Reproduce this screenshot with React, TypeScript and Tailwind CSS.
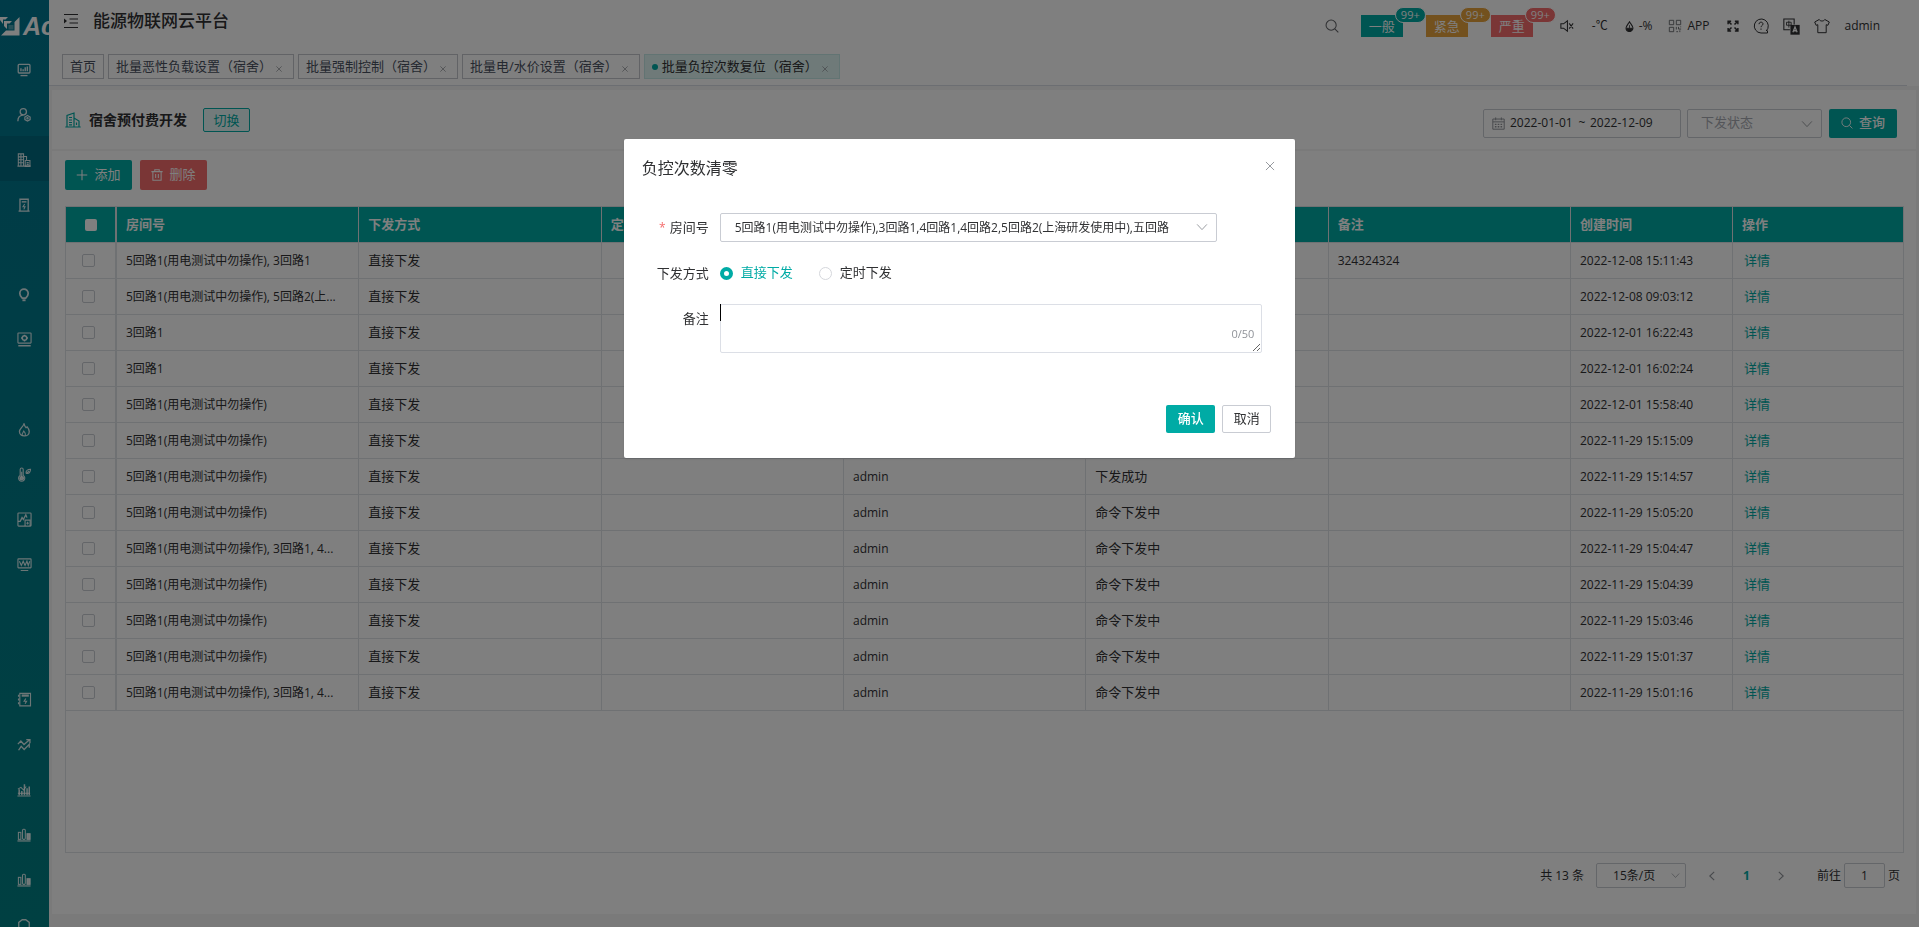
import { useState } from "react";
import type { ReactNode } from "react";
import clsx from "clsx";

type RecordRow = {
  room: string;
  operator: string;
  status: string;
  remark?: string;
  createdAt: string;
};

type TabItem = {
  label: string;
  active?: boolean;
  closable?: boolean;
};

type AlarmTag = {
  label: string;
  className: string;
};

const ROOM_A = "5回路1(用电测试中勿操作)";
const ROOM_ALL = "5回路1(用电测试中勿操作),3回路1,4回路1,4回路2,5回路2(上海研发使用中),五回路";

const TABS: TabItem[] = [
  { label: "首页" },
  { label: "批量恶性负载设置（宿舍）", closable: true },
  { label: "批量强制控制（宿舍）", closable: true },
  { label: "批量电/水价设置（宿舍）", closable: true },
  { label: "批量负控次数复位（宿舍）", closable: true, active: true },
];

const ALARMS: AlarmTag[] = [
  { label: "一般", className: "bg-[#00aba5]" },
  { label: "紧急", className: "bg-[#e6a23c]" },
  { label: "严重", className: "bg-[#f56c6c]" },
];

const COLUMNS = ["房间号", "下发方式", "定时时间", "操作人", "下发状态", "备注", "创建时间", "操作"];

const ROWS: RecordRow[] = [
  { room: `${ROOM_A}, 3回路1`, operator: "admin", status: "下发成功", remark: "324324324", createdAt: "2022-12-08 15:11:43" },
  { room: `${ROOM_A}, 5回路2(上...`, operator: "admin", status: "下发成功", createdAt: "2022-12-08 09:03:12" },
  { room: "3回路1", operator: "admin", status: "下发成功", createdAt: "2022-12-01 16:22:43" },
  { room: "3回路1", operator: "admin", status: "下发成功", createdAt: "2022-12-01 16:02:24" },
  { room: ROOM_A, operator: "admin", status: "下发成功", createdAt: "2022-12-01 15:58:40" },
  { room: ROOM_A, operator: "admin", status: "下发成功", createdAt: "2022-11-29 15:15:09" },
  { room: ROOM_A, operator: "admin", status: "下发成功", createdAt: "2022-11-29 15:14:57" },
  { room: ROOM_A, operator: "admin", status: "命令下发中", createdAt: "2022-11-29 15:05:20" },
  { room: `${ROOM_A}, 3回路1, 4...`, operator: "admin", status: "命令下发中", createdAt: "2022-11-29 15:04:47" },
  { room: ROOM_A, operator: "admin", status: "命令下发中", createdAt: "2022-11-29 15:04:39" },
  { room: ROOM_A, operator: "admin", status: "命令下发中", createdAt: "2022-11-29 15:03:46" },
  { room: ROOM_A, operator: "admin", status: "命令下发中", createdAt: "2022-11-29 15:01:37" },
  { room: `${ROOM_A}, 3回路1, 4...`, operator: "admin", status: "命令下发中", createdAt: "2022-11-29 15:01:16" },
];

function Icon({ children, className = "size-4" }: { children: ReactNode; className?: string }) {
  return (
    <svg
      viewBox="0 0 16 16"
      className={clsx("shrink-0", className)}
      fill="none"
      stroke="currentColor"
      strokeWidth="1.2"
      aria-hidden="true"
    >
      {children}
    </svg>
  );
}

function ChevronDown({ className }: { className?: string }) {
  return (
    <Icon className={clsx("pointer-events-none", className)}>
      <path d="M1.5 4.5 8 11.5l6.5-7" />
    </Icon>
  );
}

function SearchIcon({ className }: { className?: string }) {
  return (
    <Icon className={className}>
      <circle cx="7" cy="7" r="5.8" />
      <path d="m11.2 11.2 4 4" />
    </Icon>
  );
}

const chartIcon = (
  <Icon className="size-[14px]">
    <path d="M.5 14.8h15" strokeWidth="1.4" />
    <rect x="1.6" y="5" width="2.8" height="8" />
    <rect x="6.3" y="1.5" width="3.2" height="11.5" rx="1.2" />
    <rect x="11.4" y="6.5" width="3.6" height="6.5" fill="currentColor" />
  </Icon>
);

// null keeps an empty slot for a menu entry without an icon
const MENU: { name: string; icon: ReactNode }[] = [
  {
    name: "监控",
    icon: (
      <Icon className="size-[14px]">
        <rect x="1.4" y="1.6" width="13.4" height="9.8" rx="1" strokeWidth="1.5" />
        <path d="M4.5 9.5V6M7 9.5V7.2M9.4 9.5V4.8M11.8 9.5V4" strokeWidth="1.6" />
        <path d="M4 14.4h8" strokeWidth="1.5" />
      </Icon>
    ),
  },
  {
    name: "用户",
    icon: (
      <Icon className="size-[14px]">
        <circle cx="7.2" cy="4.4" r="3.6" strokeWidth="1.5" />
        <path d="M1 15c0-4 2.4-6.4 5.6-6.8" strokeWidth="1.5" />
        <path d="m12 8.6 3 1.7v2.9l-3 1.8-3-1.8v-2.9z" strokeWidth="1.4" />
        <circle cx="12" cy="11.8" r=".8" />
      </Icon>
    ),
  },
  {
    name: "宿舍",
    icon: (
      <Icon className="size-[14px]">
        <path d="M1.5 14.8V1h6v13.8M4.5 1v13.8M1.5 4.4h6M1.5 7.8h6M1.5 11.2h6M.5 15h15" />
        <path d="M7.5 4h3.4v4M9.4 8.6h5.4V15H9.4zM11 11h2.4M11 13h2.4" />
      </Icon>
    ),
  },
  {
    name: "电表",
    icon: (
      <Icon className="size-[14px]">
        <path d="M3.4 15V1.4h9.4V15M1.8 15h12.6" strokeWidth="1.5" />
        <path d="M5.4 4.4h5.4" strokeWidth="1.6" />
        <path d="m8.8 6.8-2 3.2h2.4l-1.4 3" />
      </Icon>
    ),
  },
  { name: "", icon: null },
  {
    name: "照明",
    icon: (
      <Icon className="size-[14px]">
        <path d="M6 11.6C4.4 10 3.2 8.4 3.2 6.2a4.8 4.8 0 0 1 9.6 0c0 2.2-1.2 3.8-2.8 5.4z" strokeWidth="2" />
        <path d="M6.2 14h3.6" strokeWidth="2.2" />
      </Icon>
    ),
  },
  {
    name: "设备",
    icon: (
      <Icon className="size-[15px]">
        <rect x="1" y="1" width="14" height="10.8" rx=".6" />
        <circle cx="8" cy="6.4" r="2.4" strokeWidth="1.6" />
        <path d="M8 2.8v1.2M8 8.8V10M4.4 6.4h1.2M10.4 6.4h1.2M1.4 14.6h13.2" strokeWidth="1.5" />
      </Icon>
    ),
  },
  { name: "", icon: null },
  {
    name: "消防",
    icon: (
      <Icon className="size-[14px]">
        <path d="M8 1c.6 2.2 1 3 2.4 4.4l1.2-1c1.6 1.8 2.4 3.4 2.4 5.2 0 3-2.4 5.2-5.6 5.2s-5.6-2.2-5.6-5C2.8 6.4 6.600 5 8 1z" strokeWidth="1.5" />
        <path d="M6 14.4c-.8-2.6 1-3.2 1.8-5.2 1.4 1.4 2.4 2.8 1.8 5.200" />
      </Icon>
    ),
  },
  {
    name: "温度",
    icon: (
      <Icon className="size-[15px]">
        <path d="M3.4 9V2.6a1.6 1.6 0 0 1 3.2 0V9a3.3 3.3 0 1 1-3.2 0z" />
        <circle cx="5" cy="12" r="1.9" fill="currentColor" />
        <path d="M5 11V5" />
        <path d="M9.6 6.6c0-3 2-4.2 4.8-4.2 0 3-1.6 4.8-4 4.4l2.4-2.6" />
      </Icon>
    ),
  },
  {
    name: "能耗分析",
    icon: (
      <Icon className="size-[15px]">
        <rect x="1" y="1" width="14" height="14" rx=".8" />
        <path d="M1 10h2.4l2-4 1.4 2 2.600-5 1.200 3" strokeWidth="1.4" />
        <path d="M8.600 15V8.600h5.400V15M11.300 10.400v3M10 12h2.600" />
      </Icon>
    ),
  },
  {
    name: "电能质量",
    icon: (
      <Icon className="size-[15px]">
        <rect x="1" y="2" width="14" height="9.6" rx=".6" />
        <path d="m2.6 4.5 2 4.500 2-4.500 2 4.500 2-4.500L12 9l1.600-4.500M4 14.400h8" />
      </Icon>
    ),
  },
  { name: "", icon: null },
  { name: "", icon: null },
  {
    name: "抄表",
    icon: (
      <Icon className="size-[15px]">
        <path d="M3 1.4h11.4v13.4H3zM1.600 3v2M1.600 7v2M1.600 11v2" />
        <path d="M5 3.800h7.600" strokeWidth="2.400" />
        <path d="M9.400 7 7.600 9.800h2.600l-1.600 2.800" />
      </Icon>
    ),
  },
  {
    name: "趋势",
    icon: (
      <Icon className="size-[14px]">
        <path d="m1 7 3.400-3.600L8 7.400l6-5M10.600 1.800H14.800V6" strokeWidth="1.5" />
        <path d="m1.800 14 3-4.400 3.400 3.600L14 7.200v4" strokeWidth="1.5" />
      </Icon>
    ),
  },
  {
    name: "统计",
    icon: (
      <Icon className="size-[14px]">
        <path d="M.5 14.8h15M1 11.6h14" />
        <path d="M2.5 14V7M5.500 14V9M8.500 14V1.500M11.500 14V6M14 14V4" strokeWidth="1.7" />
        <path d="m1 7 3.500-2 3 3 3-4" />
      </Icon>
    ),
  },
  { name: "报表", icon: chartIcon },
  { name: "日报", icon: chartIcon },
  {
    name: "运维",
    icon: (
      <Icon className="size-[14px]">
        <path d="M4.500 15v-3.500H2V5L6 2h4l4 3v6.500h-2.500V15" strokeWidth="1.5" />
      </Icon>
    ),
  },
];

function Logo() {
  return (
    <div className="flex h-[46px] shrink-0 items-center gap-[3px] overflow-hidden pt-1.5 text-white">
      <svg viewBox="0 0 20 20" className="size-5 shrink-0" fill="currentColor" aria-hidden="true">
        <path d="M0 1h8L5.500 3.500H3V8L0 4z" />
        <path d="M4 5h8L9.500 7.500H7V13L4 10z" />
        <path d="M19.500 1v18.500H1L6 14.500h8.500V6z" />
        <path d="M8.500 9h5v4.500h-5z" fillOpacity=".3" />
      </svg>
      <span className="font-['Liberation_Sans',sans-serif] text-[25px] leading-none font-bold italic">Ac</span>
    </div>
  );
}

function Sidebar() {
  return (
    <nav
      aria-label="主菜单"
      className="flex h-screen w-[49px] shrink-0 flex-col overflow-hidden bg-linear-to-b from-[#007790] to-[#008084]"
    >
      <Logo />
      {MENU.map((item, index) => (
        <a
          key={index}
          href="#"
          aria-label={item.name || undefined}
          className={clsx(
            "flex h-[45px] shrink-0 items-center justify-center pt-0.5 pr-px text-white/85",
            index === 2 && "bg-[#006a80]"
          )}
        >
          {item.icon}
        </a>
      ))}
    </nav>
  );
}

function Header() {
  return (
    <header className="bg-white">
      <div className="mr-3 border-b border-[#d8dce5]">
        <div className="flex h-[50px] items-start justify-between">
          <div className="flex h-[42px] items-center gap-[14px] pl-[14px]">
            <button type="button" aria-label="展开菜单" className="text-[#303133]">
              <Icon className="size-4">
                <path d="M1 1.500h14M6.500 6h8.500M6.500 10h8.500M1 14.500h14" strokeWidth="1.2" />
                <path d="M1 5.500v5L4 8z" fill="currentColor" stroke="none" />
              </Icon>
            </button>
            <h1 className="text-[17px] font-medium text-[#303133]">能源物联网云平台</h1>
          </div>

          <div className="flex h-[50px] items-center pt-0.5 pr-[27px] text-xs text-[#303133]">
            <button type="button" aria-label="搜索" className="mr-[22px] text-[#606266]">
              <SearchIcon className="size-[14px]" />
            </button>
            <div className="mr-[27px] flex gap-[23px]">
              {ALARMS.map((alarm) => (
                <button
                  key={alarm.label}
                  type="button"
                  className={clsx("relative h-[22px] w-[42px] text-[13px] leading-[22px] text-white", alarm.className)}
                >
                  {alarm.label}
                  <span
                    className={clsx(
                      "absolute -top-2 left-[34px] h-4 w-[31px] rounded-full border border-white text-[11px] leading-[14px]",
                      alarm.className
                    )}
                  >
                    99+
                  </span>
                </button>
              ))}
            </div>
            <button type="button" aria-label="静音" className="mr-[18px]">
              <Icon className="size-[14px]">
                <path d="M1 5.500h3L8.500 2v12L4 10.500H1zM10.500 5l4.500 6M15 5l-4.500 6" />
              </Icon>
            </button>
            <div className="flex items-center gap-4">
              <span>-℃</span>
              <span className="flex items-center gap-1">
                <Icon className="size-[11px]">
                  <path d="M8 1c2.500 4 5 6.500 5 9.200a5 5 0 0 1-10 0C3 7.500 5.500 5 8 1z" strokeWidth="1.600" />
                  <path d="M4 10.500h8c0 3-1.500 4.500-4 4.500s-4-1.500-4-4.500zM8 6v4" fill="currentColor" />
                </Icon>
                -%
              </span>
              <a href="#" className="flex items-center gap-[5px]">
                <Icon className="size-[14px] text-[#606266]">
                  <path d="M1.500 1.500h5v5h-5zM9.500 1.500h5v5h-5zM1.500 9.500h5v5h-5z" strokeWidth="1" />
                  <path d="M9.500 9v3M12 9v2.500h3M14.500 8.500v1M9.500 14.500h2M13.500 13v2" strokeWidth="1" />
                </Icon>
                APP
              </a>
            </div>
            <div className="ml-[18px] flex items-center gap-[14px]">
              <button type="button" aria-label="全屏">
                <Icon className="size-3">
                  <path
                    d="M1.500 5.500v-4h4M10.500 1.500h4v4M14.500 10.500v4h-4M5.500 14.500h-4v-4M2 2l4 4M14 2l-4 4M14 14l-4-4M2 14l4-4"
                    strokeWidth="2"
                  />
                </Icon>
              </button>
              <button type="button" aria-label="帮助">
                <Icon className="size-4">
                  <path d="M13.200 13A7 7 0 1 0 8 15h6.500v-2.500" strokeWidth="1" />
                  <path d="M6 6.200c0-2.800 4-2.600 4-.2 0 1.500-2 1.500-2 3.200M8 10.500v1.300" strokeWidth="1" />
                </Icon>
              </button>
              <button type="button" aria-label="语言">
                <Icon className="size-[17px]">
                  <path d="M6.500 11H.8V1h9.700v5" strokeWidth="1" />
                  <path d="M3.300 4h4.400v2.800H3.300zM5.500 2.500V9" strokeWidth=".8" />
                  <path d="M7 6.500h8.700v9.200H7z" fill="currentColor" stroke="none" />
                  <path d="m9.300 13.500 2-5 2 5M10 12h2.600" stroke="#fff" />
                </Icon>
              </button>
              <button type="button" aria-label="主题">
                <Icon className="size-4">
                  <path
                    d="M5.200 1.500C6 3.500 10 3.500 10.800 1.500L15.300 4l-1.400 3.300-1.700-.6v8H3.800v-8l-1.700.6L.7 4z"
                    strokeWidth="1"
                  />
                </Icon>
              </button>
              <a href="#">admin</a>
            </div>
          </div>
        </div>

        <div className="flex gap-1 px-[13px] pt-1 pb-1.5">
          {TABS.map((tab) => (
            <div
              key={tab.label}
              className={clsx(
                "flex h-[25px] items-center border px-[7px] text-[13px]",
                tab.active ? "border-[#c5e8e6] bg-[#dff5f3] text-[#303133]" : "border-[#c4c6cc] bg-white text-[#495060]"
              )}
            >
              {tab.active && <span className="mr-1 size-1.5 rounded-full bg-[#00aba5]" />}
              <a href="#">{tab.label}</a>
              {tab.closable && (
                <button
                  type="button"
                  aria-label={`关闭${tab.label}`}
                  className="flex w-[14px] justify-center pt-1 text-[#909399]"
                >
                  <Icon className="size-[6px]">
                    <path d="m1 1 14 14M15 1 1 15" strokeWidth="2" />
                  </Icon>
                </button>
              )}
            </div>
          ))}
        </div>
      </div>
    </header>
  );
}

function FilterBar() {
  return (
    <section className="flex h-[59px] items-center justify-between bg-white pr-[19px] pl-[13px]">
      <div className="flex items-center">
        <Icon className="size-4 text-[#00aba5]">
          <path d="M2 15V3.500L9 1v14M9 6l5 3v6M.3 15h15.400" />
          <path d="M4 5.500h3M4 8h3M4 10.500h3M4 12.800h3M11.500 10.500v2.500" />
        </Icon>
        <h2 className="ml-2 text-sm font-bold text-[#303133]">宿舍预付费开发</h2>
        <button
          type="button"
          className="ml-4 h-6 w-[47px] rounded-xs border border-[#00aba5] bg-[#e6f7f6] text-[13px] leading-[22px] text-[#00aba5]"
        >
          切换
        </button>
      </div>

      <div className="flex items-center pt-[7px] text-xs text-[#303133]">
        <div className="flex h-[29px] w-[198px] items-center rounded-xs border border-[#c9ccd3] bg-white pl-2">
          <Icon className="size-[13px] text-[#909399]">
            <path d="M1 2.500h14v12.500H1zM1 6h14M4.500 .5v3.500M11.500 .5v3.500" />
            <path d="M3.500 9h9M3.500 12h9" strokeDasharray="2 1.500" strokeWidth="1.600" />
          </Icon>
          <input aria-label="开始日期" defaultValue="2022-01-01" className="ml-[5px] w-16 outline-none" />
          <span className="w-4 text-center">~</span>
          <input aria-label="结束日期" defaultValue="2022-12-09" className="w-16 outline-none" />
        </div>
        <div className="relative ml-1.5">
          <select
            aria-label="下发状态"
            className="block h-[29px] w-[135px] appearance-none rounded-xs border border-[#c9ccd3] bg-white pl-[13px] text-[13px] text-[#a8abb2]"
          >
            <option>下发状态</option>
          </select>
          <ChevronDown className="absolute top-[9px] right-[9px] size-3 text-[#909399]" />
        </div>
        <button
          type="button"
          className="ml-[7px] flex h-[29px] w-[68px] items-center justify-center gap-1.5 rounded-xs bg-[#00aba5] text-[13px] font-medium text-white"
        >
          <SearchIcon className="size-3" />
          查询
        </button>
      </div>
    </section>
  );
}

function RecordTable() {
  const cell = "h-9 truncate border-r border-b border-[#dfe2e6] px-[9px]";

  return (
    <table className="w-full table-fixed border-separate border-spacing-0 text-[13px] text-[#303133]">
      <colgroup>
        <col className="w-[51px]" />
        <col span={6} />
        <col className="w-[162px]" />
        <col className="w-[170px]" />
      </colgroup>
      <thead className="bg-[#00aba5] text-white">
        <tr>
          <th className="h-9 border-r-2 border-b border-[#dfe2e6]">
            <input type="checkbox" aria-label="全选" className="mx-auto block size-3 appearance-none rounded-xs bg-white" />
          </th>
          {COLUMNS.map((column) => (
            <th key={column} scope="col" className={clsx(cell, "text-left font-bold last:border-r-0")}>
              {column}
            </th>
          ))}
        </tr>
      </thead>
      <tbody>
        {ROWS.map((row) => (
          <tr key={row.createdAt}>
            <td className="h-9 border-r-2 border-b border-[#dfe2e6] pr-1">
              <input
                type="checkbox"
                aria-label={`选择 ${row.createdAt}`}
                className="mx-auto block size-[13px] appearance-none rounded-xs border border-[#c9ccd3]"
              />
            </td>
            <td className={clsx(cell, "text-xs")}>{row.room}</td>
            <td className={cell}>直接下发</td>
            <td className={cell} />
            <td className={clsx(cell, "text-xs")}>{row.operator}</td>
            <td className={cell}>{row.status}</td>
            <td className={clsx(cell, "text-xs")}>{row.remark}</td>
            <td className={clsx(cell, "text-xs")}>{row.createdAt}</td>
            <td className="h-9 border-b border-[#dfe2e6] px-[11px]">
              <a href="#" className="text-[#00aba5]">
                详情
              </a>
            </td>
          </tr>
        ))}
      </tbody>
    </table>
  );
}

function Pagination() {
  return (
    <div className="flex h-[61px] items-start justify-end pt-[10px] pr-1 text-xs text-[#303133]">
      <div className="flex h-[25px] items-center">
        <span>共 13 条</span>
        <div className="relative ml-3">
          <select
            aria-label="每页条数"
            className="block h-[25px] w-[90px] appearance-none rounded-xs border border-[#c9ccd3] bg-white pl-4"
          >
            <option>15条/页</option>
          </select>
          <ChevronDown className="absolute top-2 right-[6px] size-[9px] text-[#909399]" />
        </div>
        <button type="button" aria-label="上一页" className="ml-[21px] text-[#909399]">
          <Icon className="size-[10px]">
            <path d="M11.500 1.500 4.500 8l7 6.500" strokeWidth="1.800" />
          </Icon>
        </button>
        <button type="button" className="mx-[26px] font-bold text-[#00aba5]">
          1
        </button>
        <button type="button" aria-label="下一页" className="text-[#909399]">
          <Icon className="size-[10px]">
            <path d="m4.500 1.500 7 6.500-7 6.500" strokeWidth="1.800" />
          </Icon>
        </button>
        <label htmlFor="page" className="ml-[31px]">
          前往
        </label>
        <input
          id="page"
          defaultValue="1"
          className="mx-[3px] h-[25px] w-[41px] rounded-xs border border-[#c9ccd3] text-center outline-none"
        />
        <span>页</span>
      </div>
    </div>
  );
}

function ResetDialog() {
  const [mode, setMode] = useState("now");
  const [remark, setRemark] = useState("");

  const label = "h-[29px] w-24 shrink-0 pr-[11px] text-right leading-[29px]";
  const radio = "size-[13px] appearance-none rounded-full border border-[#d5d7dc] checked:border-4 checked:border-[#00aba5]";

  return (
    <div className="fixed inset-0 flex items-start justify-center bg-black/50">
      <div
        role="dialog"
        aria-modal="true"
        aria-labelledby="dialog-title"
        className="mt-[15vh] w-[35%] rounded-xs bg-white pb-[25px] text-[13px] text-[#303133] shadow-sm"
      >
        <div className="flex items-start justify-between pt-[19px] pr-[19px] pl-[18px]">
          <h2 id="dialog-title" className="text-base leading-5">
            负控次数清零
          </h2>
          <button type="button" aria-label="关闭" className="flex h-4 w-3 items-center justify-center text-[#909399]">
            <Icon className="size-[10px]">
              <path d="m1.500 1.500 13 13M14.500 1.500l-13 13" strokeWidth="1.500" />
            </Icon>
          </button>
        </div>

        <form className="mt-[35px]">
          <div className="flex items-start">
            <label htmlFor="room" className={label}>
              <span className="mr-1 text-xs text-[#f56c6c]">*</span>
              房间号
            </label>
            <div className="relative mr-[78px] min-w-0 flex-1">
              <select
                id="room"
                className="block h-[29px] w-full appearance-none rounded-xs border border-[#c9ccd3] bg-white pr-6 pl-[14px] text-xs"
              >
                <option>{ROOM_ALL}</option>
              </select>
              <ChevronDown className="absolute top-2 right-[9px] size-3 text-[#909399]" />
            </div>
          </div>

          <fieldset className="mt-4 flex h-[30px] items-center">
            <legend className="sr-only">下发方式</legend>
            <span className={label} aria-hidden="true">
              下发方式
            </span>
            <label className={clsx("flex items-center gap-2", mode === "now" && "text-[#00aba5]")}>
              <input type="radio" name="mode" checked={mode === "now"} onChange={() => setMode("now")} className={radio} />
              直接下发
            </label>
            <label className={clsx("ml-[26px] flex items-center gap-2", mode === "timer" && "text-[#00aba5]")}>
              <input type="radio" name="mode" checked={mode === "timer"} onChange={() => setMode("timer")} className={radio} />
              定时下发
            </label>
          </fieldset>

          <div className="mt-4 flex items-start">
            <label htmlFor="remark" className={label}>
              备注
            </label>
            <div className="relative mr-[33px] min-w-0 flex-1">
              <textarea
                id="remark"
                maxLength={50}
                value={remark}
                onChange={(event) => setRemark(event.target.value)}
                className="block h-[49px] w-full resize rounded-xs border border-[#dcdfe6] px-3 py-1 outline-none"
              />
              {remark.length === 0 && <span className="absolute top-0 left-0 h-[17px] w-px bg-black" />}
              <span className="pointer-events-none absolute right-2 bottom-[11px] text-[11px] leading-4 text-[#909399]">
                {remark.length}/50
              </span>
            </div>
          </div>

          <div className="mt-[52px] flex justify-end gap-[7px] pr-6">
            <button type="submit" className="h-7 w-[49px] rounded-xs bg-[#00aba5] font-medium text-white">
              确认
            </button>
            <button type="button" className="h-7 w-[49px] rounded-xs border border-[#c9ccd3] bg-white">
              取消
            </button>
          </div>
        </form>
      </div>
    </div>
  );
}

export default function App() {
  return (
    <div className="flex h-screen bg-[#f5f5f5] font-['Open_Sans','Noto_Sans_CJK_SC',sans-serif]">
      <Sidebar />
      <div className="flex min-w-0 flex-1 flex-col">
        <Header />
        <main className="mx-[3px] mt-1 mb-[13px] flex flex-1 flex-col gap-0.5">
          <FilterBar />
          <section className="flex flex-1 flex-col bg-white pt-[9px] pr-3 pl-[13px]">
            <div className="flex gap-2 text-[13px] text-white">
              <button
                type="button"
                className="flex h-[30px] w-[67px] items-center justify-center gap-1.5 rounded-xs bg-[#00aba5]"
              >
                <Icon className="size-3">
                  <path d="M8 1v14M1 8h14" strokeWidth="1.4" />
                </Icon>
                添加
              </button>
              <button
                type="button"
                className="flex h-[30px] w-[67px] items-center justify-center gap-1.5 rounded-xs bg-[#f56c6c]"
              >
                <Icon className="size-3">
                  <path
                    d="M.5 3.500h15M5 3.500V1h6v2.500M2.500 3.500V15h11V3.500M6.200 6.500v5.500M9.800 6.500v5.500"
                    strokeWidth="1.4"
                  />
                </Icon>
                删除
              </button>
            </div>
            <div className="mt-4 flex-1 border border-[#dfe2e6]">
              <RecordTable />
            </div>
            <Pagination />
          </section>
        </main>
      </div>
      <ResetDialog />
    </div>
  );
}
